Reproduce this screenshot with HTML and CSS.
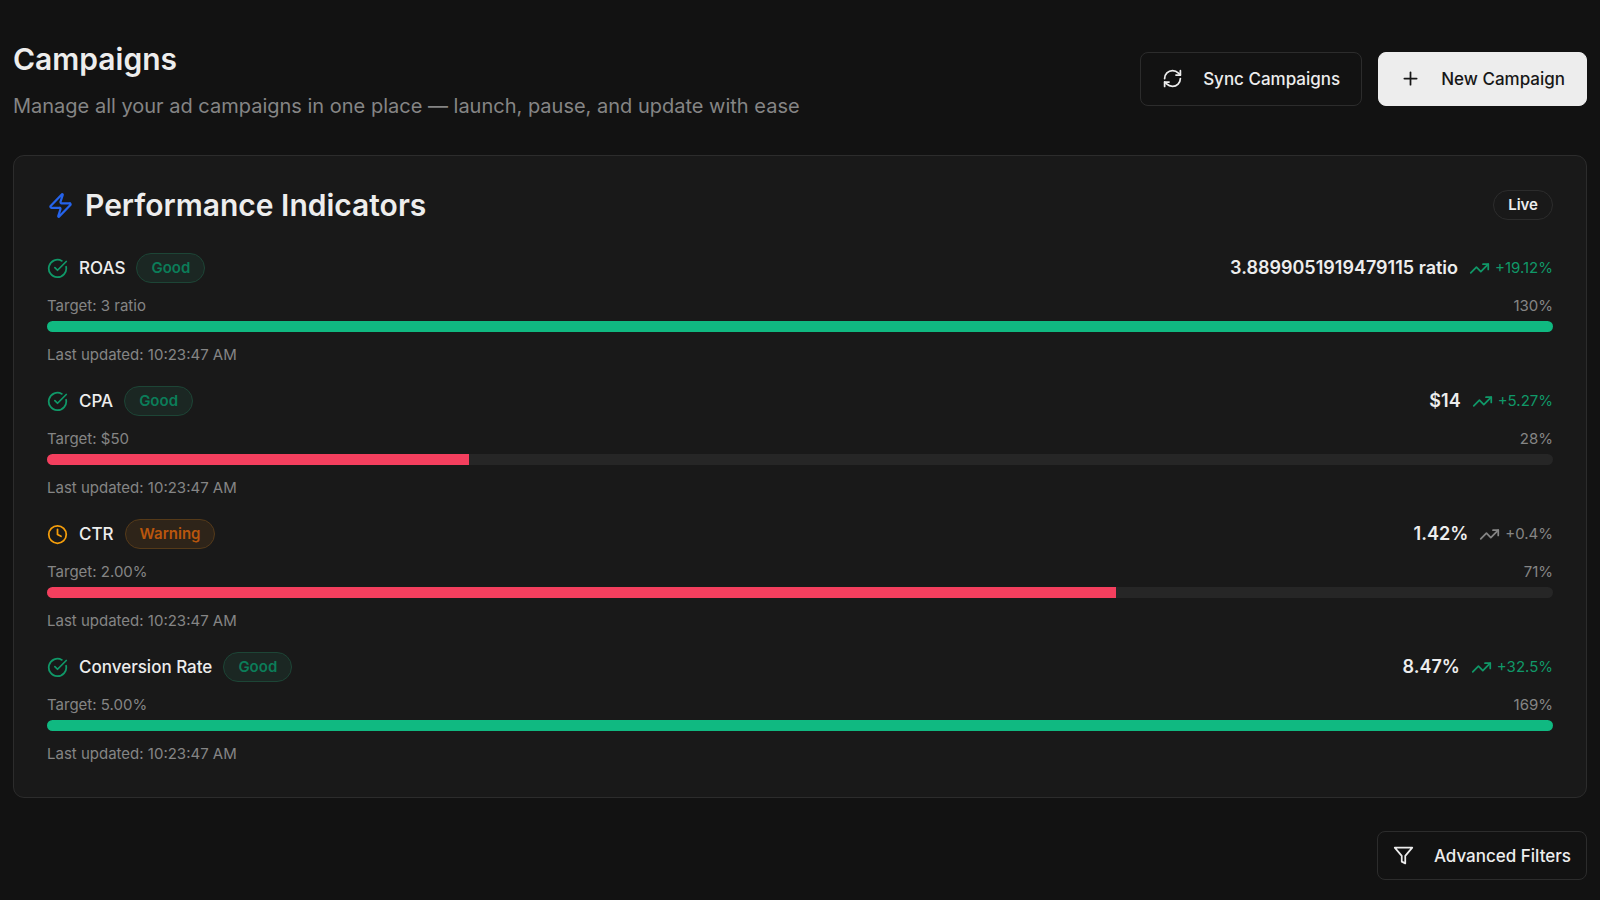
FILE: index.html
```html
<!DOCTYPE html>
<html lang="en">
<head>
<meta charset="utf-8">
<meta name="viewport" content="width=device-width, initial-scale=1">
<title>Campaigns</title>
<link rel="stylesheet" href="styles.css">
</head>
<body>
<svg class="sprite" aria-hidden="true">
  <symbol id="i-check" viewBox="0 0 24 24"><path d="M21.801 10A10 10 0 1 1 17 3.335"/><path d="m9 11 3 3L22 4"/></symbol>
  <symbol id="i-clock" viewBox="0 0 24 24"><circle cx="12" cy="12" r="10"/><path d="M12 6v6l4 2"/></symbol>
  <symbol id="i-trend" viewBox="0 0 24 24"><path d="M22 7 13.5 15.500 8.500 10.500 2 17"/><path d="M16 7h6v6"/></symbol>
</svg>
<main class="page">
  <header class="page-header">
    <div>
      <h1 class="title">Campaigns</h1>
      <p class="subtitle">Manage all your ad campaigns in one place — launch, pause, and update with ease</p>
    </div>
    <div class="actions">
      <button class="btn" type="button">
        <svg class="icon" viewBox="0 0 24 24" aria-hidden="true"><path d="M3 12a9 9 0 0 1 9-9 9.750 9.750 0 0 1 6.740 2.740L21 8"/><path d="M21 3v5h-5"/><path d="M21 12a9 9 0 0 1-9 9 9.750 9.750 0 0 1-6.740-2.740L3 16"/><path d="M8 16H3v5"/></svg>
        Sync Campaigns
      </button>
      <button class="btn btn-primary" type="button">
        <svg class="icon" viewBox="0 0 24 24" aria-hidden="true"><path d="M5 12h14"/><path d="M12 5v14"/></svg>
        New Campaign
      </button>
    </div>
  </header>

  <section class="card" aria-labelledby="kpi-title">
    <div class="card-header">
      <svg class="icon icon-zap" viewBox="0 0 24 24" aria-hidden="true"><path d="M4 14a1 1 0 0 1-.78-1.630l9.900-10.200a.5.5 0 0 1 .86.46l-1.920 6.020A1 1 0 0 0 13 10h7a1 1 0 0 1 .78 1.630l-9.900 10.200a.5.5 0 0 1-.86-.46l1.920-6.020A1 1 0 0 0 11 14z"/></svg>
      <h2 class="title" id="kpi-title">Performance Indicators</h2>
      <span class="badge badge-live">Live</span>
    </div>
    <ul class="metrics">
      <li class="metric">
        <div class="metric-head">
          <svg class="icon good" aria-hidden="true"><use href="#i-check"/></svg>
          <h3 class="metric-name">ROAS</h3>
          <span class="badge badge-good">Good</span>
          <strong class="value">3.8899051919479115 ratio</strong>
          <span class="trend good"><svg class="icon" aria-hidden="true"><use href="#i-trend"/></svg>+19.12%</span>
        </div>
        <div class="target"><span>Target: 3 ratio</span><span>130%</span></div>
        <div class="bar"><div class="fill fill-good" style="width:100%"></div></div>
        <p class="updated">Last updated: 10:23:47 AM</p>
      </li>
      <li class="metric">
        <div class="metric-head">
          <svg class="icon good" aria-hidden="true"><use href="#i-check"/></svg>
          <h3 class="metric-name">CPA</h3>
          <span class="badge badge-good">Good</span>
          <strong class="value">$14</strong>
          <span class="trend good"><svg class="icon" aria-hidden="true"><use href="#i-trend"/></svg>+5.27%</span>
        </div>
        <div class="target"><span>Target: $50</span><span>28%</span></div>
        <div class="bar"><div class="fill fill-bad" style="width:28%"></div></div>
        <p class="updated">Last updated: 10:23:47 AM</p>
      </li>
      <li class="metric">
        <div class="metric-head">
          <svg class="icon warn" aria-hidden="true"><use href="#i-clock"/></svg>
          <h3 class="metric-name">CTR</h3>
          <span class="badge badge-warn">Warning</span>
          <strong class="value">1.42%</strong>
          <span class="trend"><svg class="icon" aria-hidden="true"><use href="#i-trend"/></svg>+0.4%</span>
        </div>
        <div class="target"><span>Target: 2.00%</span><span>71%</span></div>
        <div class="bar"><div class="fill fill-bad" style="width:71%"></div></div>
        <p class="updated">Last updated: 10:23:47 AM</p>
      </li>
      <li class="metric">
        <div class="metric-head">
          <svg class="icon good" aria-hidden="true"><use href="#i-check"/></svg>
          <h3 class="metric-name">Conversion Rate</h3>
          <span class="badge badge-good">Good</span>
          <strong class="value">8.47%</strong>
          <span class="trend good"><svg class="icon" aria-hidden="true"><use href="#i-trend"/></svg>+32.5%</span>
        </div>
        <div class="target"><span>Target: 5.00%</span><span>169%</span></div>
        <div class="bar"><div class="fill fill-good" style="width:100%"></div></div>
        <p class="updated">Last updated: 10:23:47 AM</p>
      </li>
    </ul>
  </section>

  <div class="filters">
    <button class="btn btn-compact" type="button">
      <svg class="icon" viewBox="0 0 24 24" aria-hidden="true"><path d="M22 3H2l8 9.460V19l4 2v-8.540z"/></svg>
      Advanced Filters
    </button>
  </div>
</main>
</body>
</html>
```
FILE: styles.css
```css
* { box-sizing: border-box; }

body {
  margin: 0;
  background: #121212;
  color: #ededed;
  font-family: Inter, "Liberation Sans", sans-serif;
  font-size: 15px;
  line-height: 24px;
}

h1, h2, h3, p, ul { margin: 0; padding: 0; }

.sprite { display: none; }

.icon {
  flex: none;
  width: 21px;
  height: 21px;
  fill: none;
  stroke: currentColor;
  stroke-width: 2;
  stroke-linecap: round;
  stroke-linejoin: round;
}

.page { padding: 38px 13px 20px; }

.page-header {
  display: flex;
  align-items: center;
  justify-content: space-between;
  margin-bottom: 36px;
}

.title {
  font-size: 30px;
  font-weight: 600;
  line-height: 42px;
}

.subtitle {
  margin-top: 13px;
  color: #858585;
  font-size: 20px;
  line-height: 26px;
}

.actions { display: flex; gap: 16px; }

.btn {
  display: flex;
  align-items: center;
  gap: 20px;
  height: 54px;
  padding: 0 21px;
  border: 1px solid #2c2c2c;
  border-radius: 8px;
  background: transparent;
  color: #ededed;
  font: 500 17px/24px Inter, "Liberation Sans", sans-serif;
}

.btn-primary {
  border-color: #ededed;
  background: #ededed;
  color: #171717;
}

.btn-compact { height: 49px; padding: 0 15px; }

.card {
  padding: 34px 33px 31px;
  border: 1px solid #2c2c2c;
  border-radius: 11px;
  background: #191919;
}

.card-header {
  display: flex;
  align-items: center;
  gap: 11px;
  height: 30px;
  margin-bottom: 33px;
}

.icon-zap {
  width: 27px;
  height: 27px;
  color: #2563eb;
}

.badge {
  padding: 0 14px;
  border: 1px solid #2c2c2c;
  border-radius: 15px;
  font-weight: 600;
  line-height: 28px;
}

.badge-live { margin-left: auto; }
.badge-good { border-color: #1d4536; background: #1b2723; color: #0b7d59; }
.badge-warn { border-color: #553a19; background: #2e2419; color: #b9560d; }

.metrics {
  display: grid;
  gap: 19px;
  list-style: none;
}

.metric-head {
  display: flex;
  align-items: center;
  gap: 11px;
  margin-bottom: 11px;
}

.metric-name {
  font-size: 17px;
  font-weight: 500;
}

.value {
  margin-left: auto;
  font-size: 18px;
  font-weight: 600;
}

.trend {
  display: flex;
  align-items: center;
  gap: 5px;
  color: #858585;
}

.good { color: #109868; }
.warn { color: #f59e0b; }

.target {
  display: flex;
  justify-content: space-between;
  margin-bottom: 3px;
  color: #858585;
}

.bar {
  height: 11px;
  margin-bottom: 11px;
  overflow: hidden;
  border-radius: 6px;
  background: #262626;
}

.fill { height: 100%; }
.fill-good { background: #10b981; }
.fill-bad { background: #f43f5e; }

.updated { color: #858585; }

.filters {
  display: flex;
  justify-content: flex-end;
  margin-top: 33px;
}
```
